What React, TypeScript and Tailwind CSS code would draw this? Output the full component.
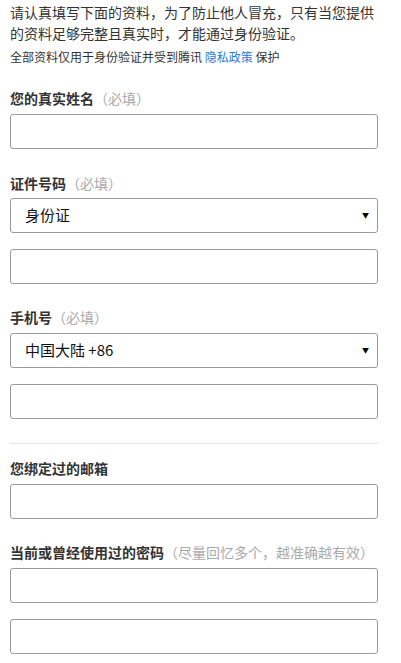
const font = { fontFamily: '"Noto Sans CJK SC", "Noto Sans", sans-serif' };

function Label({ title, hint }: { title: string; hint?: string }) {
  return (
    <div className="text-[14px] leading-[20px] text-[#333] font-bold">
      {title}
      {hint && <span className="font-normal text-[#aaa]">（{hint}）</span>}
    </div>
  );
}

function TextBox() {
  return <div className="h-[35px] w-[368px] rounded-[3px] border border-[#9a9a9a] bg-white" />;
}

function SelectBox({ value }: { value: string }) {
  return (
    <div className="flex h-[35px] w-[368px] items-center justify-between rounded-[3px] border border-[#9a9a9a] bg-white pl-[14px] pr-[8px]">
      <span className="text-[15px] text-[#111]">{value}</span>
      <span className="text-[7px] text-black">▼</span>
    </div>
  );
}

export default function App() {
  return (
    <div className="min-h-[663px] w-[401px] bg-white px-[10px]" style={font}>
      <p className="w-[368px] pt-[2px] text-[14px] leading-[21px] text-[#333]">
        请认真填写下面的资料，为了防止他人冒充，只有当您提供的资料足够完整且真实时，才能通过身份验证。
      </p>
      <p className="mt-[4px] text-[12px] leading-[18px] text-[#333]">
        全部资料仅用于身份验证并受到腾讯 <span className="text-[#2f7bd5]">隐私政策</span> 保护
      </p>

      <div className="mt-[22px]">
        <Label title="您的真实姓名" hint="必填" />
        <div className="mt-[6px]">
          <TextBox />
        </div>
      </div>

      <div className="mt-[24px]">
        <Label title="证件号码" hint="必填" />
        <div className="mt-[5px] flex flex-col gap-[16px]">
          <SelectBox value="身份证" />
          <TextBox />
        </div>
      </div>

      <div className="mt-[23px]">
        <Label title="手机号" hint="必填" />
        <div className="mt-[6px] flex flex-col gap-[16px]">
          <SelectBox value="中国大陆 +86" />
          <TextBox />
        </div>
      </div>

      <div className="mt-[24px] h-px w-[368px] bg-[#e3e3e3]" />

      <div className="mt-[14px]">
        <Label title="您绑定过的邮箱" />
        <div className="mt-[6px]">
          <TextBox />
        </div>
      </div>

      <div className="mt-[23px]">
        <Label title="当前或曾经使用过的密码" hint="尽量回忆多个，越准确越有效" />
        <div className="mt-[6px] flex flex-col gap-[16px]">
          <TextBox />
          <TextBox />
        </div>
      </div>
    </div>
  );
}
